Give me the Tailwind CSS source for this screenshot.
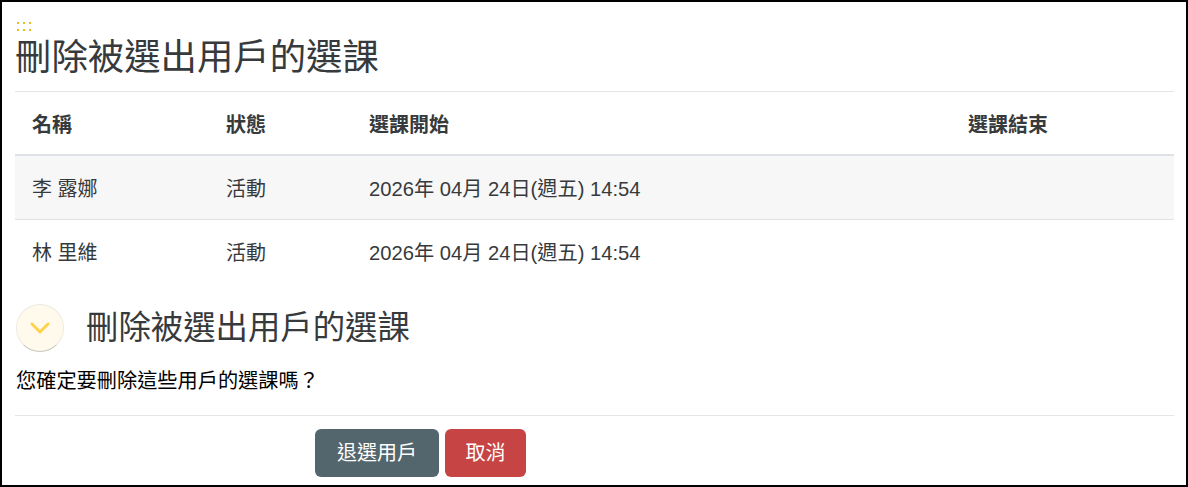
<!DOCTYPE html>
<html lang="zh-Hant">
<head>
  <meta charset="UTF-8">
  <title>刪除被選出用戶的選課</title>
  <script src="https://cdn.jsdelivr.net/npm/@tailwindcss/browser@4"></script>
</head>
<body class="bg-white">
  <div class="h-[487px] border-2 border-black pl-[13px] pr-[12px] overflow-hidden font-['Liberation_Sans','Noto_Sans_CJK_TC',sans-serif] text-[#373a3c]">
    <div class="h-[90px] border-b border-[#e5e5e5] flex flex-col">
      <div class="pt-[18px] pl-[2px] h-[24px]">
        <div class="grid grid-cols-3 w-[14px] gap-x-[4px] gap-y-[5px] pt-[2px]">
          <span class="w-[2px] h-[2px] bg-[#ecb91f]"></span><span class="w-[2px] h-[2px] bg-[#ecb91f]"></span><span class="w-[2px] h-[2px] bg-[#ecb91f]"></span>
          <span class="w-[2px] h-[2px] bg-[#ecb91f]"></span><span class="w-[2px] h-[2px] bg-[#ecb91f]"></span><span class="w-[2px] h-[2px] bg-[#ecb91f]"></span>
        </div>
      </div>
      <h1 class="text-[36.4px] leading-[40px] font-normal pt-[12px]">刪除被選出用戶的選課</h1>
    </div>

    <table class="w-full table-fixed text-[20px] border-collapse">
      <thead>
        <tr class="h-[63px] border-b-2 border-[#dee2e6]">
          <th class="w-[195px] pl-[17px] pt-1 text-left font-bold">名稱</th>
          <th class="w-[143px] pl-4 pt-1 text-left font-bold">狀態</th>
          <th class="w-[599px] pl-4 pt-1 text-left font-bold">選課開始</th>
          <th class="pl-4 pt-1 text-left font-bold">選課結束</th>
        </tr>
      </thead>
      <tbody>
        <tr class="h-[64px] bg-[#f7f7f7] border-b border-[#dee2e6]">
          <td class="pl-[17px] pt-1">李 露娜</td>
          <td class="pl-4 pt-1">活動</td>
          <td class="pl-4 pt-1 text-[20.2px]">2026年 04月 24日(週五) 14:54</td>
          <td></td>
        </tr>
        <tr class="h-[64px]">
          <td class="pl-[17px] pt-1">林 里維</td>
          <td class="pl-4 pt-1">活動</td>
          <td class="pl-4 pt-1 text-[20.2px]">2026年 04月 24日(週五) 14:54</td>
          <td></td>
        </tr>
      </tbody>
    </table>

    <div class="flex items-center mt-[21px] h-[48px]">
      <div class="w-[48px] h-[48px] ml-px rounded-full bg-[#fffaeb] border border-[#eeeae0] border-b-[#c9c6bd] flex items-center justify-center">
        <svg width="20" height="12" viewBox="0 0 20 12" fill="none" stroke="#fdd34d" stroke-width="3" stroke-linecap="round" stroke-linejoin="round"><path d="M2 2l8 8 8-8"/></svg>
      </div>
      <h2 class="ml-[22px] text-[32.4px] font-normal leading-[40px]">刪除被選出用戶的選課</h2>
    </div>

    <p class="mt-[17px] ml-px text-[20.2px] leading-[24px] text-black">您確定要刪除這些用戶的選課嗎？</p>

    <div class="mt-[22px] border-t border-[#e5e5e5] pt-[13px] pl-[300px] flex gap-[6px]">
      <button class="h-[48px] w-[124px] rounded-[6px] bg-[#53666d] text-white text-[20px] font-normal">退選用戶</button>
      <button class="h-[48px] w-[81px] rounded-[6px] bg-[#c64444] text-white text-[20px] font-normal">取消</button>
    </div>
  </div>
</body>
</html>
